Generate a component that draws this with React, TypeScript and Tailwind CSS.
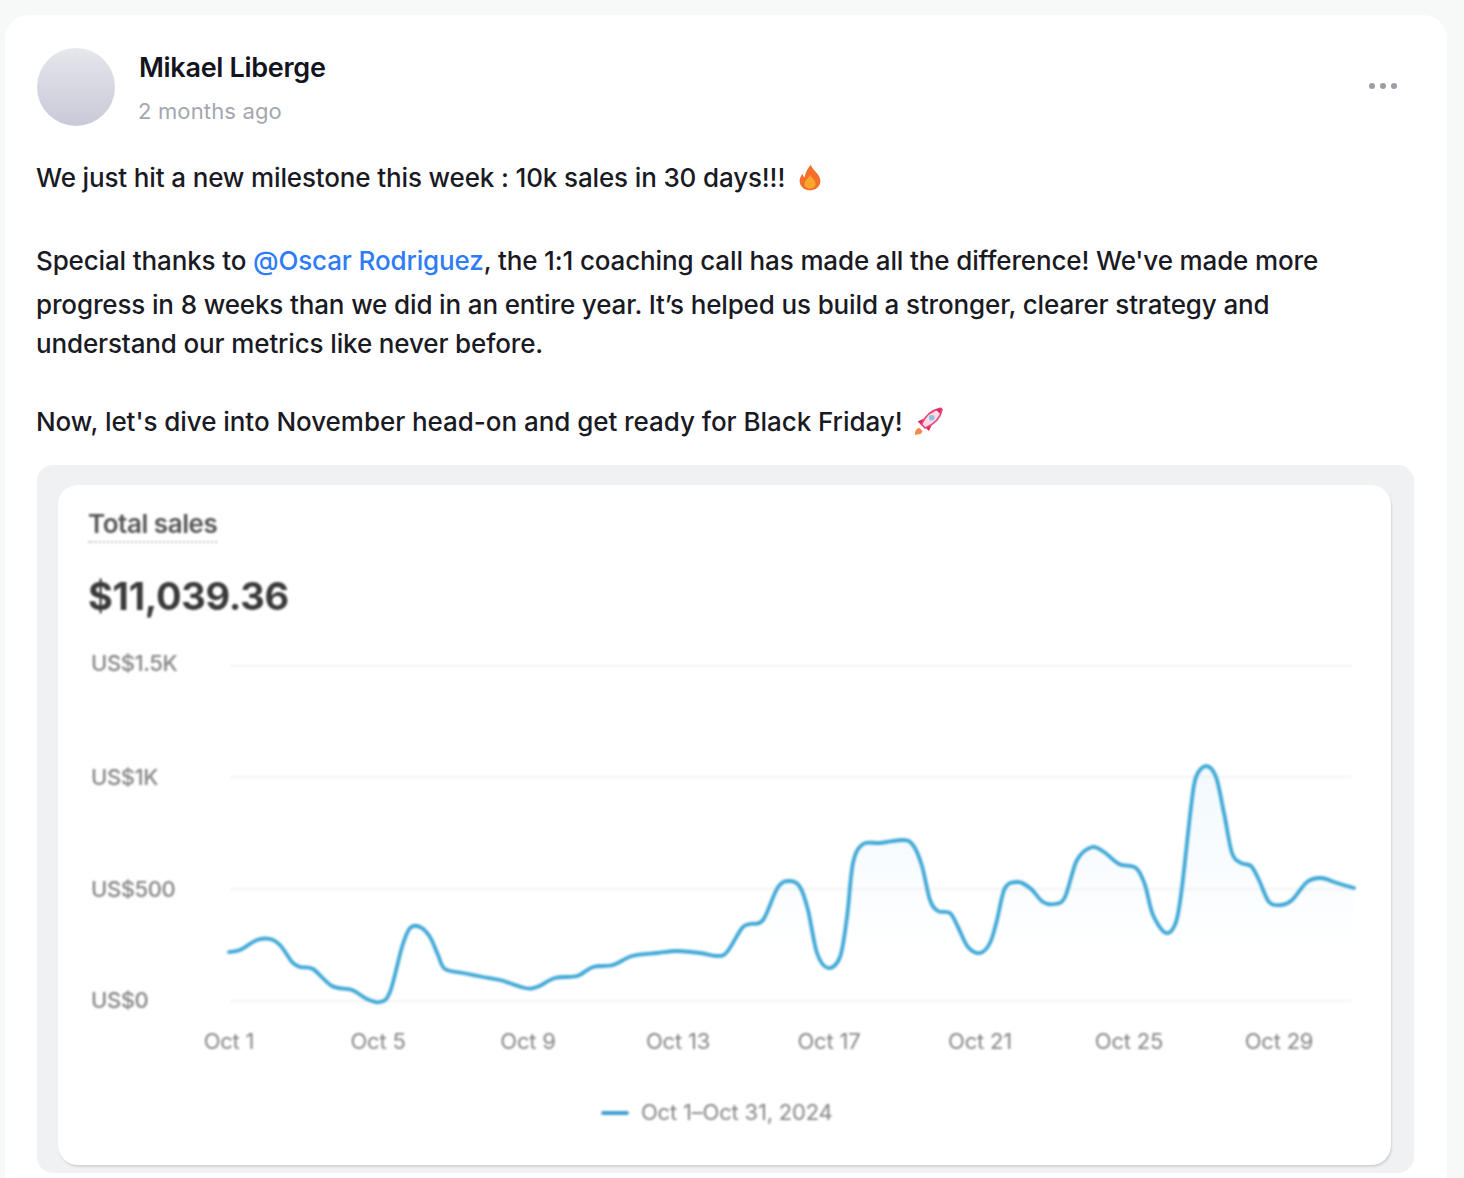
const curve: [number, number][] = [
  [229, 952], [240, 950], [257, 940], [270, 939], [280, 945], [292, 962], [300, 967], [313, 969],
  [332, 986], [352, 990], [367, 999], [380, 1002], [390, 992], [402, 947], [410, 928], [420, 927],
  [430, 937], [438, 955], [445, 969], [463, 973], [483, 977], [500, 980], [525, 988], [537, 987], [555, 978],
  [577, 976], [593, 967], [613, 965], [632, 956], [657, 953], [677, 951], [700, 953], [717, 956],
  [727, 952], [742, 928], [750, 924], [763, 920], [778, 887], [790, 881], [800, 887], [808, 910],
  [817, 953], [828, 968], [840, 957], [847, 917], [853, 863], [863, 844], [880, 843], [903, 840],
  [913, 845], [922, 866], [930, 900], [938, 911], [950, 913], [958, 927], [968, 947], [980, 953],
  [990, 943], [997, 920], [1005, 888], [1018, 882], [1030, 888], [1043, 902], [1055, 904], [1065, 897],
  [1077, 860], [1092, 847], [1104, 852], [1119, 864], [1136, 868], [1145, 885], [1153, 915], [1166, 933],
  [1176, 922], [1182, 887], [1191, 807], [1196, 777], [1206, 766], [1216, 777], [1224, 813], [1232, 853],
  [1241, 863], [1251, 866], [1259, 880], [1269, 902], [1281, 905], [1292, 900], [1307, 882], [1321, 878],
  [1337, 883], [1354, 888],
];

// smooth the traced points with catmull-rom segments
function smoothPath(pts: [number, number][]) {
  let d = `M${pts[0][0]} ${pts[0][1]}`;
  for (let i = 0; i < pts.length - 1; i++) {
    const p0 = pts[i - 1] ?? pts[i];
    const p1 = pts[i];
    const p2 = pts[i + 1];
    const p3 = pts[i + 2] ?? p2;
    const c1x = p1[0] + (p2[0] - p0[0]) / 6;
    const c1y = p1[1] + (p2[1] - p0[1]) / 6;
    const c2x = p2[0] - (p3[0] - p1[0]) / 6;
    const c2y = p2[1] - (p3[1] - p1[1]) / 6;
    d += ` C${c1x.toFixed(1)} ${c1y.toFixed(1)} ${c2x.toFixed(1)} ${c2y.toFixed(1)} ${p2[0]} ${p2[1]}`;
  }
  return d;
}

const linePath = smoothPath(curve);
const gridLines = [666, 777, 889, 1001];
const yLabels = [
  { y: 671, text: "US$1.5K" },
  { y: 785, text: "US$1K" },
  { y: 897, text: "US$500" },
  { y: 1008, text: "US$0" },
];
const xLabels = [
  { x: 229, text: "Oct 1" },
  { x: 378, text: "Oct 5" },
  { x: 528, text: "Oct 9" },
  { x: 678, text: "Oct 13" },
  { x: 829, text: "Oct 17" },
  { x: 980, text: "Oct 21" },
  { x: 1129, text: "Oct 25" },
  { x: 1279, text: "Oct 29" },
];

function Fire() {
  return (
    <svg width="22" height="27" viewBox="0 0 24 28" className="ml-[14px] inline-block">
      <path d="M13 0c1 4 4 6 7 10 3 4 4 7 3 10-1 5-6 8-11 8S2 25 1 20c-1-4 1-8 3-10 0 2 1 3 2 4 1-5 3-10 7-14z" fill="#f4702a" />
      <path d="M12 11c1 3 6 5 6 10 0 3-3 5-6 5s-6-2-6-5c0-4 5-6 6-10z" fill="#fba62c" />
    </svg>
  );
}

function Rocket() {
  return (
    <svg width="30" height="29" viewBox="0 0 32 30" className="ml-[10px] inline-block">
      <path d="M2 29c0-4 2-7 5-7l3 3c0 3-4 4-8 4z" fill="#f6894a" />
      <path d="M5 15l6-3-2 7zM17 25l3-6-7 2z" fill="#e8245f" />
      <path d="M9 18C13 9 20 3 29 1c1-.2 2 .8 1.800 1.800C29 12 22 18 13 22z" fill="#f9dce4" stroke="#e8457a" strokeWidth="1.800" />
      <path d="M24 2l5-1 1 1-1 5z" fill="#e8245f" />
      <circle cx="20" cy="11" r="3" fill="#8fbfe6" />
    </svg>
  );
}

export default function App() {
  return (
    <div className="h-[1178px] w-full overflow-hidden bg-[#f7f9f9] pl-[5px] pt-[15px] font-['Inter',sans-serif]">
      <div className="w-[1442px] rounded-t-[24px] bg-white px-[32px] pt-[33px] pb-[20px]">
        {/* Header */}
        <div className="flex items-start">
          <div className="h-[78px] w-[78px] rounded-full bg-gradient-to-b from-[#e6e6ec] to-[#c9c9d8]" />
          <div className="ml-[24px] flex grow flex-col">
            <div className="text-[27px] leading-[40px] font-semibold tracking-[-0.3px] text-[#14141e]">Mikael Liberge</div>
            <div className="mt-[3px] -ml-[1px] text-[22px] leading-[40px] tracking-[0.15px] text-[#a4a6b0]">2 months ago</div>
          </div>
          <div className="mr-[18px] mt-[35px] flex gap-[5px]">
            <span className="h-[6px] w-[6px] rounded-full bg-[#9b9ea6]" />
            <span className="h-[6px] w-[6px] rounded-full bg-[#9b9ea6]" />
            <span className="h-[6px] w-[6px] rounded-full bg-[#9b9ea6]" />
          </div>
        </div>

        {/* Post body */}
        <div className="mt-[26px] -ml-[1px] whitespace-nowrap text-[26px] font-[450] tracking-[-0.14px] text-[#1a1a24]">
          <div className="flex h-[41px] items-center">We just hit a new milestone this week : 10k sales in 30 days!!! <Fire /></div>
          <div className="mt-[42px] h-[41px] leading-[41px]">
            Special thanks to <span className="text-[#2e7cf6]">@Oscar Rodriguez</span>, the 1:1 coaching call has made all the difference! We've made more
          </div>
          <div className="mt-[3px] h-[41px] leading-[41px]">progress in 8 weeks than we did in an entire year. It’s helped us build a stronger, clearer strategy and</div>
          <div className="mt-[-2px] h-[41px] leading-[41px]">understand our metrics like never before.</div>
          <div className="mt-[37px] flex h-[41px] items-center tracking-[-0.05px]">Now, let's dive into November head-on and get ready for Black Friday! <Rocket /></div>
        </div>

        {/* Attached screenshot */}
        <div className="mt-[23px] h-[708px] w-[1377px] rounded-[16px] bg-[#f0f1f2] pl-[21px] pt-[20px]">
          <div className="h-[680px] w-[1333px] overflow-hidden rounded-[20px] bg-white shadow-[1px_2px_2px_rgba(0,0,0,0.12)]">
            <div className="px-[30px] pt-[23px] blur-[0.8px]">
              <div className="w-fit border-b-2 border-dotted border-[#c4c4c4] pb-[1px] text-[26px] leading-[32px] font-semibold tracking-[-0.45px] text-[#555555]">Total sales</div>
              <div className="mt-[30px] text-[38px] leading-[46px] font-bold tracking-[-0.3px] text-[#3a3a3a]">$11,039.36</div>
            </div>
            <svg width="1333" height="520" viewBox="58 645 1333 520" className="mt-[26px] block blur-[0.8px]">
              <defs>
                <linearGradient id="area" x1="0" y1="0" x2="0" y2="1">
                  <stop offset="0" stopColor="#dff0fa" stopOpacity="0.4" />
                  <stop offset="0.8" stopColor="#dff0fa" stopOpacity="0" />
                </linearGradient>
              </defs>
              {gridLines.map((y) => (
                <line key={y} x1="230" x2="1352" y1={y} y2={y} stroke="#f3f3f3" strokeWidth="2" />
              ))}
              <path d={`${linePath} L1354 1001 L229 1001 Z`} fill="url(#area)" />
              <path d={linePath} fill="none" stroke="#3fa8d6" strokeWidth="3.800" strokeLinecap="round" strokeLinejoin="round" />
              {yLabels.map((l) => (
                <text key={l.text} x="91" y={l.y} fontSize="22" fontWeight="500" fill="#858585" letterSpacing="-0.4">
                  {l.text}
                </text>
              ))}
              {xLabels.map((l) => (
                <text key={l.text} x={l.x} y="1049" fontSize="22" textAnchor="middle" fill="#858585" letterSpacing="-0.2">
                  {l.text}
                </text>
              ))}
              <line x1="603" x2="627" y1="1113" y2="1113" stroke="#3f9fd0" strokeWidth="3.800" strokeLinecap="round" />
              <text x="641" y="1120" fontSize="22" fill="#858585" letterSpacing="-0.2">
                Oct 1–Oct 31, 2024
              </text>
            </svg>
          </div>
        </div>
      </div>
    </div>
  );
}
